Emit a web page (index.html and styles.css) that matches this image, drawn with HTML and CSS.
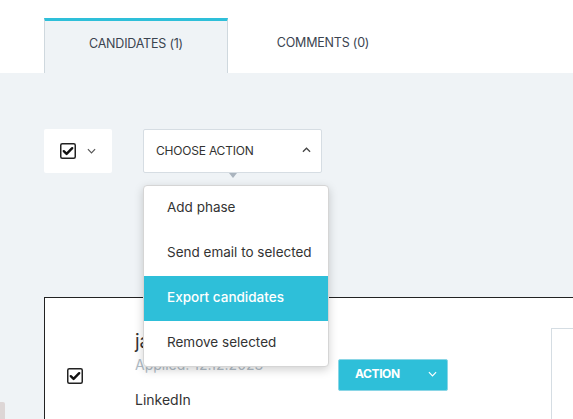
FILE: index.html
```html
<!DOCTYPE html>
<html>
<head>
<meta charset="utf-8">
<link rel="stylesheet" href="styles.css">
</head>
<body>
<div class="header">
  <div class="tabs">
    <div class="tab active">CANDIDATES (1)</div>
    <div class="tab">COMMENTS (0)</div>
  </div>
</div>
<div class="main">
  <div class="toolbar">
    <div class="selectall">
      <span class="cb">
        <svg viewBox="0 0 16 16" width="16" height="16"><rect x="0.75" y="0.75" width="14.5" height="14.5" rx="1.5" fill="#fff" stroke="#222" stroke-width="1.5"/><path d="M3.8 8.2 L6.6 10.9 L12.2 5.2" fill="none" stroke="#111" stroke-width="2.4" stroke-linecap="round" stroke-linejoin="round"/></svg>
      </span>
      <svg class="chev" viewBox="0 0 10 6" width="9" height="6"><path d="M1 1 L5 5 L9 1" fill="none" stroke="#555" stroke-width="1.3"/></svg>
    </div>
    <div class="choose">
      <span>CHOOSE ACTION</span>
      <svg viewBox="0 0 10 6" width="9" height="6"><path d="M1 5 L5 1 L9 5" fill="none" stroke="#444" stroke-width="1.4"/></svg>
      <span class="caret"></span>
      <div class="menu">
        <div class="item">Add phase</div>
        <div class="item">Send email to selected</div>
        <div class="item hl">Export candidates</div>
        <div class="item">Remove selected</div>
      </div>
    </div>
  </div>
  <div class="cardrow">
    <div class="side"><div class="chip"></div></div>
    <div class="card">
      <div class="cardcb">
        <svg viewBox="0 0 16 16" width="16" height="16"><rect x="0.75" y="0.75" width="14.5" height="14.5" rx="1.5" fill="#fff" stroke="#222" stroke-width="1.5"/><path d="M3.8 8.2 L6.6 10.9 L12.2 5.2" fill="none" stroke="#111" stroke-width="2.4" stroke-linecap="round" stroke-linejoin="round"/></svg>
      </div>
      <div class="info">
        <div class="name">jane doe</div>
        <div class="applied">Applied: 12.12.2023</div>
        <div class="source">LinkedIn</div>
      </div>
      <div class="actioncol">
        <div class="action">
          <span>ACTION</span>
          <svg viewBox="0 0 10 6" width="9" height="6"><path d="M1 1 L5 5 L9 1" fill="none" stroke="#fff" stroke-width="1.3"/></svg>
        </div>
      </div>
      <div class="rightbox"></div>
    </div>
  </div>
</div>
</body>
</html>
```
FILE: styles.css
```css
* { box-sizing: border-box; }
html, body { margin: 0; padding: 0; }
body {
  width: 573px;
  height: 419px;
  overflow: hidden;
  font-family: Inter, "Noto Sans", sans-serif;
  background: #eff3f6;
  color: #333;
}
.header {
  background: #fff;
  height: 73px;
  padding: 18px 0 0 44px;
}
.tabs { display: flex; height: 55px; }
.tab {
  width: 190px;
  display: flex;
  align-items: center;
  justify-content: center;
  font-size: 12.5px;
  color: #3b4450;
  letter-spacing: -0.2px;
  padding-bottom: 6px;
}
.tab.active {
  width: 184px;
  background: #eff3f6;
  border-top: 3px solid #2ebfd9;
  border-left: 1px solid #cfd8de;
  border-right: 1px solid #cfd8de;
  padding-bottom: 7px;
}
.main { padding-top: 56px; }
.toolbar {
  display: flex;
  gap: 31px;
  padding-left: 44px;
  height: 44px;
}
.selectall {
  width: 68px;
  height: 44px;
  background: #fff;
  border-radius: 2px;
  display: flex;
  align-items: center;
  padding-left: 16px;
  gap: 11px;
}
.selectall .cb { display: flex; }
.choose {
  position: relative;
  width: 179px;
  height: 44px;
  background: #fff;
  border: 1px solid #d6dde3;
  border-radius: 2px;
  display: flex;
  align-items: center;
  justify-content: space-between;
  padding: 0 10px 2px 12px;
  font-size: 12px;
  color: #333;
  letter-spacing: -0.2px;
}
.caret {
  position: absolute;
  left: 85px;
  top: 43px;
  width: 0; height: 0;
  border-left: 4px solid transparent;
  border-right: 4px solid transparent;
  border-top: 5px solid #aab4be;
}
.menu {
  position: absolute;
  left: -1px;
  top: 55px;
  width: 186px;
  background: #fff;
  border: 1px solid #d5d5d5;
  border-radius: 4px;
  box-shadow: 0 3px 10px rgba(0,0,0,0.18);
  z-index: 10;
  overflow: hidden;
  letter-spacing: 0;
}
.item {
  height: 45px;
  display: flex;
  align-items: center;
  padding: 0 0 4px 23px;
  font-size: 13.5px;
  color: #333;
}
.item.hl {
  background: #2ebfd9;
  color: #fff;
  font-weight: 500;
}
.cardrow {
  display: flex;
  margin-top: 124px;
  height: 122px;
  overflow: hidden;
}
.side { width: 44px; flex: none; padding-top: 105px; }
.chip { width: 5px; height: 40px; background: #ddd6d6; border-radius: 0 2px 0 0; }
.card {
  flex: 1;
  background: #fff;
  border-top: 1.5px solid #222;
  border-left: 1.5px solid #222;
  display: flex;
  align-items: flex-start;
}
.cardcb { width: 90px; padding: 70px 0 0 22px; flex: none; }
.cardcb svg { display: block; }
.info { width: 203px; flex: none; padding-top: 32px; }
.name { font-size: 19px; color: #333; line-height: 24px; }
.applied { font-size: 14px; color: #b1bcc6; margin-top: 2px; line-height: 18px; }
.source { font-size: 14px; color: #333; margin-top: 17px; line-height: 18px; }
.actioncol { width: 213px; flex: none; padding-top: 61px; }
.action {
  width: 110px;
  height: 32px;
  background: #2ebfd9;
  border: 1px solid #8ad6e6;
  border-radius: 2px;
  display: flex;
  align-items: center;
  justify-content: space-between;
  padding: 0 10px 3px 16px;
  color: #fff;
  font-size: 12px;
  font-weight: 700;
  letter-spacing: -0.4px;
}
.rightbox {
  flex: 1;
  margin-top: 30px;
  height: 200px;
  border-top: 1px solid #d5dde3;
  border-left: 1px solid #d5dde3;
}
```
